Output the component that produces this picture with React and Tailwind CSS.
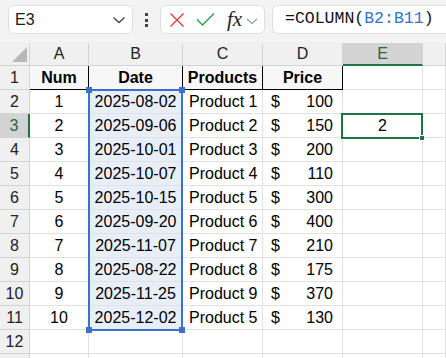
import React from "react";

const COLS = ["A", "B", "C", "D", "E", ""];
const ROWS = [
  [1, "2025-08-02", "Product 1", 100],
  [2, "2025-09-06", "Product 2", 150],
  [3, "2025-10-01", "Product 3", 200],
  [4, "2025-10-07", "Product 4", 110],
  [5, "2025-10-15", "Product 5", 300],
  [6, "2025-09-20", "Product 6", 400],
  [7, "2025-11-07", "Product 7", 210],
  [8, "2025-08-22", "Product 8", 175],
  [9, "2025-11-25", "Product 9", 370],
  [10, "2025-12-02", "Product 5", 130],
];

const font = { fontFamily: '"Liberation Sans", Arial, sans-serif' };

function Toolbar() {
  return (
    <div className="flex h-[43px] items-start gap-0 bg-[#f3f3f3] pt-[5px]">
      {/* name box */}
      <div className="ml-[8px] flex h-[29px] w-[125px] items-center justify-between rounded-[6px] border border-[#dedede] bg-white pl-[6px] pr-[6px]">
        <span className="text-[16px] text-[#1a1a1a]">E3</span>
        <svg width="14" height="8" viewBox="0 0 14 8" fill="none">
          <path d="M1.5 1.5 L7 6.5 L12.5 1.5" stroke="#444" strokeWidth="1.3" />
        </svg>
      </div>
      {/* dots */}
      <div className="flex w-[27px] flex-col items-center gap-[2.5px] pt-[8px]">
        <span className="h-[3px] w-[3px] bg-[#444]" />
        <span className="h-[3px] w-[3px] bg-[#444]" />
        <span className="h-[3px] w-[3px] bg-[#444]" />
      </div>
      {/* fx box */}
      <div className="flex h-[29px] w-[105px] items-center rounded-[6px] border border-[#dedede] bg-white pl-[8px]">
        <svg width="16" height="16" viewBox="0 0 16 16" fill="none">
          <path d="M1.5 1.5 L14.5 14.5 M14.5 1.5 L1.5 14.5" stroke="#e5383b" strokeWidth="1.4" />
        </svg>
        <svg className="ml-[11px]" width="19" height="15" viewBox="0 0 19 15" fill="none">
          <path d="M1 7.5 L6.5 13 L18 1.5" stroke="#2fa04f" strokeWidth="1.5" />
        </svg>
        <span
          className="ml-[12px] text-[21px] italic leading-none text-[#222]"
          style={{ fontFamily: '"Liberation Serif", "Times New Roman", serif' }}
        >
          fx
        </span>
        <svg className="ml-[4px] mt-[3px]" width="12" height="7" viewBox="0 0 12 7" fill="none">
          <path d="M1 1 L6 5.5 L11 1" stroke="#999" strokeWidth="1.2" />
        </svg>
      </div>
      {/* formula */}
      <div className="ml-[7px] flex h-[29px] flex-1 items-center rounded-l-[6px] border border-r-0 border-[#dedede] bg-white pl-[12px]">
        <span
          className="text-[16.5px] text-[#111]"
          style={{ fontFamily: '"Liberation Mono", "DejaVu Sans Mono", monospace' }}
        >
          =COLUMN(<span className="text-[#2f75c8]">B2:B11</span>)
        </span>
      </div>
    </div>
  );
}

function HeaderRow() {
  return (
    <>
      <div className="relative h-[23px] border-b border-r border-[#d4d4d4] bg-[#f0f0f0]">
        <svg className="absolute bottom-[3px] right-[2px]" width="15" height="15" viewBox="0 0 15 15">
          <path d="M15 0 L15 15 L0 15 Z" fill="#b8b8b8" />
        </svg>
      </div>
      {COLS.map((c, i) =>
        c === "E" ? (
          <div
            key={i}
            className="flex h-[23px] items-center justify-center border-b-2 border-r border-b-[#217346] border-r-[#d4d4d4] bg-[#d3d3d3] text-[16px] text-[#1e6b41]"
          >
            {c}
          </div>
        ) : (
          <div
            key={i}
            className="flex h-[23px] items-center justify-center border-b border-r border-[#d4d4d4] bg-[#f0f0f0] text-[16px] text-[#222]"
          >
            {c}
          </div>
        )
      )}
    </>
  );
}

function RowHead({ n }) {
  if (n === 3) {
    return (
      <div className="flex h-[24px] items-center justify-center border-b border-r-2 border-b-[#d4d4d4] border-r-[#217346] bg-[#d3d3d3] text-[16px] text-[#1e6b41]">
        {n}
      </div>
    );
  }
  return (
    <div className="flex h-[24px] items-center justify-center border-b border-r border-[#d4d4d4] bg-[#f0f0f0] text-[16px] text-[#222]">
      {n}
    </div>
  );
}

const cell = "flex h-[24px] items-center border-b border-r border-[#e1e1e1] text-[16px] text-black";
const head = "flex h-[24px] items-center justify-center border-b-[1.5px] border-r border-black bg-[#f7f7f7] text-[16px] font-bold text-black";

export default function App() {
  return (
    <div className="h-[358px] w-[446px] overflow-hidden bg-white" style={font}>
      <Toolbar />
      <div className="relative grid grid-cols-[30px_59px_94px_80px_80px_80px_1fr]">
        <HeaderRow />

        {/* row 1 */}
        <RowHead n={1} />
        <div className={head}>Num</div>
        <div className={head}>Date</div>
        <div className={head}>Products</div>
        <div className={head}>Price</div>
        <div className={cell} />
        <div className={cell} />

        {ROWS.map((r, i) => (
          <React.Fragment key={i}>
            <RowHead n={i + 2} />
            <div className={`${cell} justify-center`}>{r[0]}</div>
            <div className={`${cell} justify-center bg-[#e8eef8]`}>{r[1]}</div>
            <div className={`${cell} pl-[6px]`}>{r[2]}</div>
            <div className={`${cell} justify-between pl-[8px] pr-[9px]`}>
              <span>$</span>
              <span>{r[3]}</span>
            </div>
            <div className={`${cell} justify-center`}>{i === 1 ? 2 : ""}</div>
            <div className={cell} />
          </React.Fragment>
        ))}

        {[12, ""].map((n, k) => (
          <React.Fragment key={k}>
            <RowHead n={n} />
            <div className={cell} />
            <div className={cell} />
            <div className={cell} />
            <div className={cell} />
            <div className={cell} />
            <div className={cell} />
          </React.Fragment>
        ))}

        {/* selection B2:B11 */}
        <div className="pointer-events-none absolute left-[88px] top-[46px] h-[242px] w-[95px] border-2 border-[#3b6fd0]">
          <span className="absolute -left-[4px] -top-[4px] h-[6px] w-[6px] bg-[#3b6fd0]" />
          <span className="absolute -right-[4px] -top-[4px] h-[6px] w-[6px] bg-[#3b6fd0]" />
          <span className="absolute -bottom-[4px] -left-[4px] h-[6px] w-[6px] bg-[#3b6fd0]" />
          <span className="absolute -bottom-[4px] -right-[4px] h-[6px] w-[6px] bg-[#3b6fd0]" />
        </div>

        {/* active cell E3 */}
        <div className="pointer-events-none absolute left-[341px] top-[70px] h-[26px] w-[82px] border-2 border-[#217346]">
          <span className="absolute -bottom-[4px] -right-[4px] h-[6px] w-[6px] border border-white bg-[#217346]" />
        </div>
      </div>
    </div>
  );
}
